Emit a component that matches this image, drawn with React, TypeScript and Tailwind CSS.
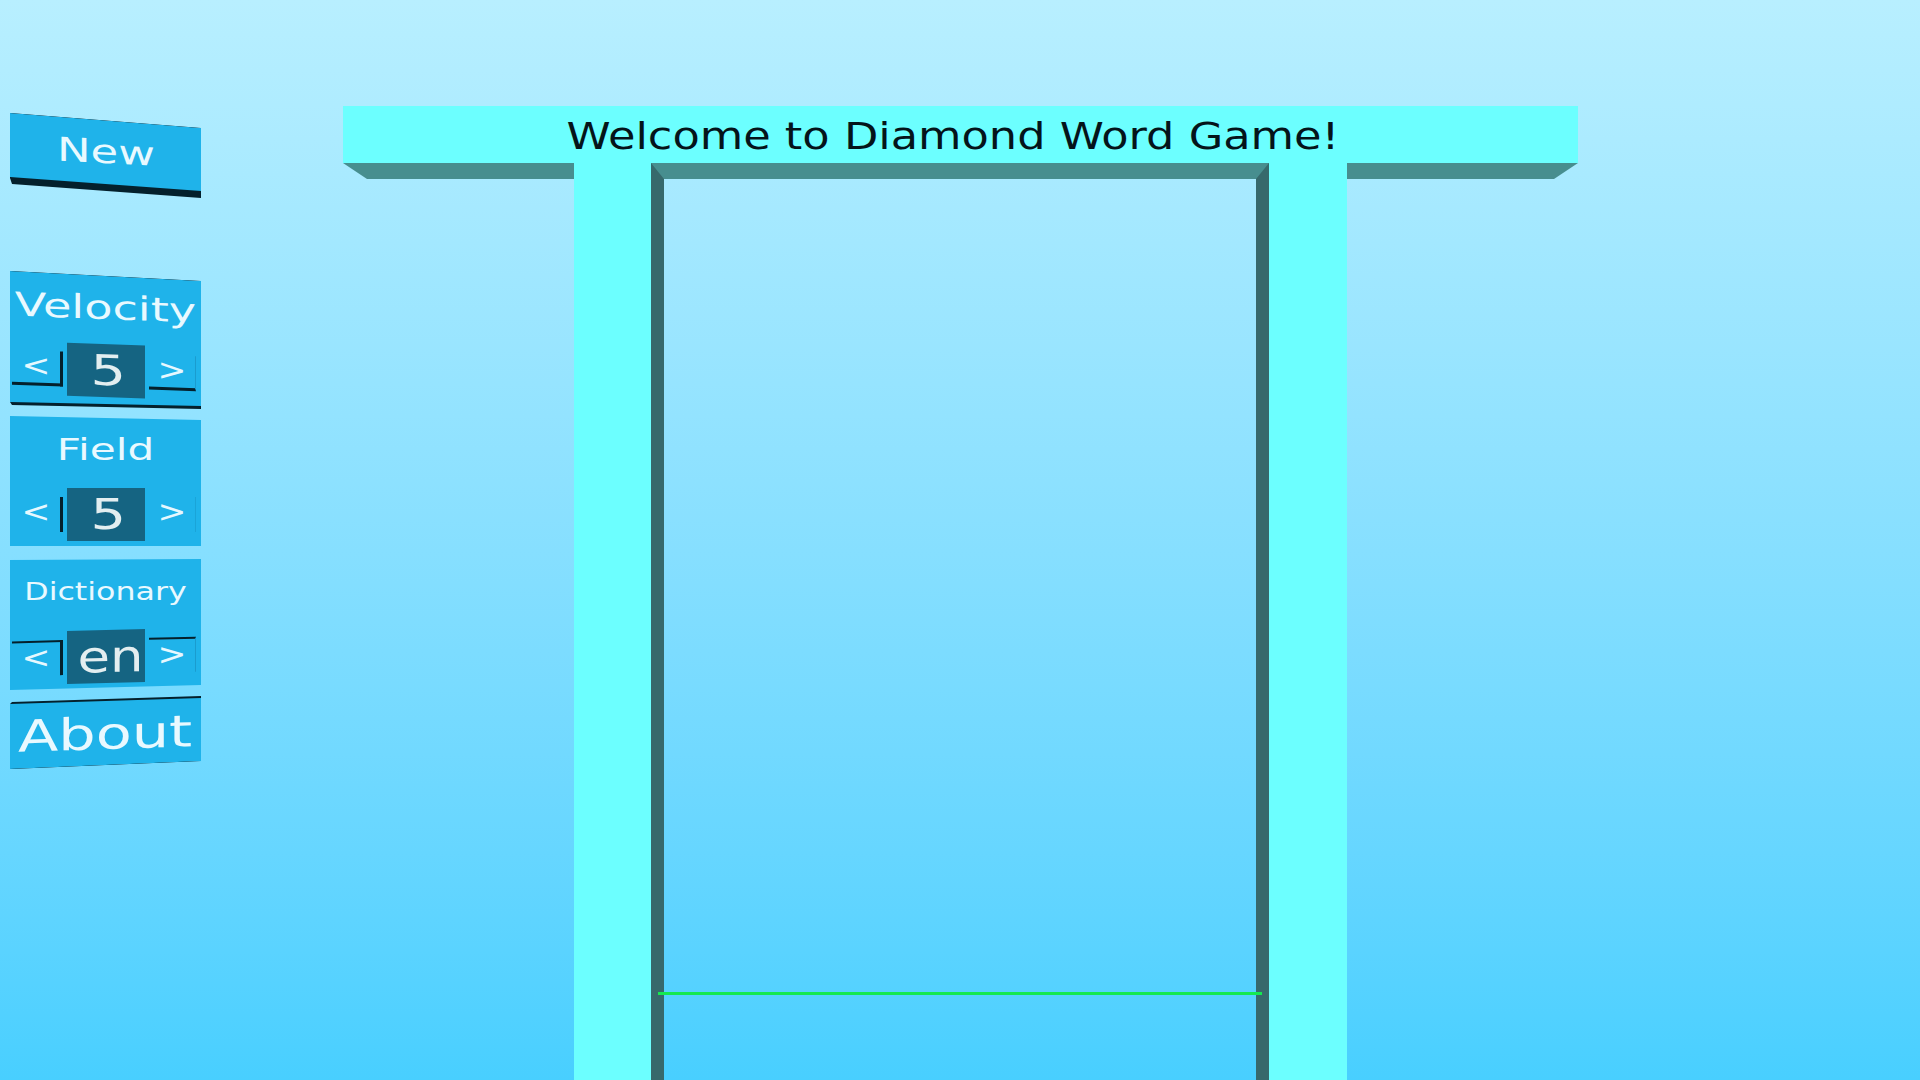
const stepBtn = 'flex items-center justify-center text-[30px] leading-none text-[#e6f8ff] scale-x-[1.15]';

function Stepper({ value, tilt, left, right, valueClass }: { value: string; tilt: string; left: string; right: string; valueClass: string }) {
  return (
    <div className={`flex items-center gap-[4px] pl-[2px] ${tilt}`}>
      <div className={`w-[51px] h-[35px] box-border ${left}`}><div className={stepBtn}>&lt;</div></div>
      <div className="w-[78px] h-[53px] bg-[#156482] flex items-center justify-center text-[#e3eef0]">
        <span className={valueClass}>{value}</span>
      </div>
      <div className={`w-[47px] h-[35px] box-border ${right}`}><div className={stepBtn}>&gt;</div></div>
    </div>
  );
}

export default function App() {
  return (
    <div className="h-screen w-full overflow-hidden flex bg-gradient-to-b from-[#b8efff] to-[#48cfff] [font-family:'DejaVu_Sans',sans-serif]">
      {/* side menu */}
      <div className="w-[201px] shrink-0 pl-[10px] pt-[113px] flex flex-col text-[#e9f9ff]">
        <div className="w-[191px] h-[85px] bg-[#04202c] [clip-path:polygon(0_0,191px_15px,191px_85px,2px_71px,0_65px)]">
          <div className="h-full bg-[#1fb3ea] [clip-path:polygon(0_0,191px_15px,191px_78px,0_64px)] flex justify-center pt-[22px]">
            <span className="text-[33px] leading-none skew-y-[4deg] scale-x-[1.36]">New</span>
          </div>
        </div>

        <div className="mt-[73px] w-[191px] h-[138px] bg-[#04202c] [clip-path:polygon(0_0,191px_10px,191px_138px,2px_134px,0_131px)]">
          <div className="h-full bg-[#1fb3ea] [clip-path:polygon(0_0,191px_10px,191px_135px,0_131px)] flex flex-col pt-[17px]">
            <div className="text-[33px] leading-[40px] text-center skew-y-[3deg] scale-x-[1.4]">Velocity</div>
            <div className="mt-[16px]">
              <Stepper
                value="5"
                valueClass="text-[42px] leading-none inline-block scale-x-[1.33] translate-x-[2px]"
                tilt="skew-y-[2deg]"
                left="border-r-[3px] border-b-[3px] border-[#04202c]"
                right="border-b-[3px] border-r border-[#04202c] border-r-[#1a9ccf]"
              />
            </div>
          </div>
        </div>

        <div className="mt-[7px] w-[191px] h-[130px] bg-[#1fb3ea] [clip-path:polygon(0_0,191px_4px,191px_130px,0_130px)] flex flex-col pt-[15px]">
          <div className="text-[31px] leading-[36px] text-center scale-x-[1.36]">Field</div>
          <div className="mt-[21px]">
            <Stepper
              value="5"
              valueClass="text-[42px] leading-none inline-block scale-x-[1.33] translate-x-[2px]"
              tilt=""
              left="border-r-[3px] border-[#04202c]"
              right="border-r border-[#1aa4d8]"
            />
          </div>
        </div>

        <div className="mt-[13px] w-[191px] h-[131px] bg-[#1fb3ea] [clip-path:polygon(0_1px,191px_0,191px_126px,0_131px)] flex flex-col pt-[17px]">
          <div className="text-[24px] leading-[32px] text-center scale-x-[1.32]">Dictionary</div>
          <div className="mt-[22px]">
            <Stepper
              value="en"
              valueClass="text-[44px] leading-none inline-block scale-x-[1.2] translate-x-[4px]"
              tilt="-skew-y-[1.5deg]"
              left="border-r-[3px] border-t-[2px] border-[#04202c]"
              right="border-t-[2px] border-r border-[#04202c] border-r-[#1a9ccf]"
            />
          </div>
        </div>

        <div className="mt-[6px] w-[191px] h-[73px] bg-[#04202c] [clip-path:polygon(2px_6px,191px_0,191px_2px,191px_65px,0_73px,0_8px)]">
          <div className="h-full bg-[#1fb3ea] [clip-path:polygon(0_8px,191px_2px,191px_65px,0_73px)] flex justify-center pt-[16px]">
            <span className="text-[44px] leading-none -skew-y-[2.5deg] scale-x-[1.34]">About</span>
          </div>
        </div>
      </div>

      {/* game board */}
      <div className="ml-[142px] w-[1235px] pt-[106px] flex flex-col">
        <div className="h-[57px] bg-[#6cffff] flex items-center justify-center text-[#04141a] text-[38px] pt-[4px] pr-[16px]">
          <span className="inline-block scale-x-[1.175]">Welcome to Diamond Word Game!</span>
        </div>
        <div className="flex-1 flex">
          <div className="w-[231px] h-[16px] bg-[#478e8f] [clip-path:polygon(0_0,100%_0,100%_100%,24px_100%)]" />
          <div className="w-[77px] bg-[#6cffff]" />
          <div className="relative w-[618px] flex justify-between">
            <div className="w-[13px] bg-[#37696c]" />
            <div className="w-[13px] bg-[#37696c]" />
            <div className="absolute top-0 inset-x-0 h-[16px] bg-[#478e8f] [clip-path:polygon(0_0,100%_0,calc(100%-13px)_100%,13px_100%)]" />
            <div className="absolute top-[829px] left-[7px] right-[7px] h-[3px] bg-[#14e850]" />
          </div>
          <div className="w-[78px] bg-[#6cffff]" />
          <div className="w-[231px] h-[16px] bg-[#478e8f] [clip-path:polygon(0_0,100%_0,calc(100%-24px)_100%,0_100%)]" />
        </div>
      </div>
    </div>
  );
}
